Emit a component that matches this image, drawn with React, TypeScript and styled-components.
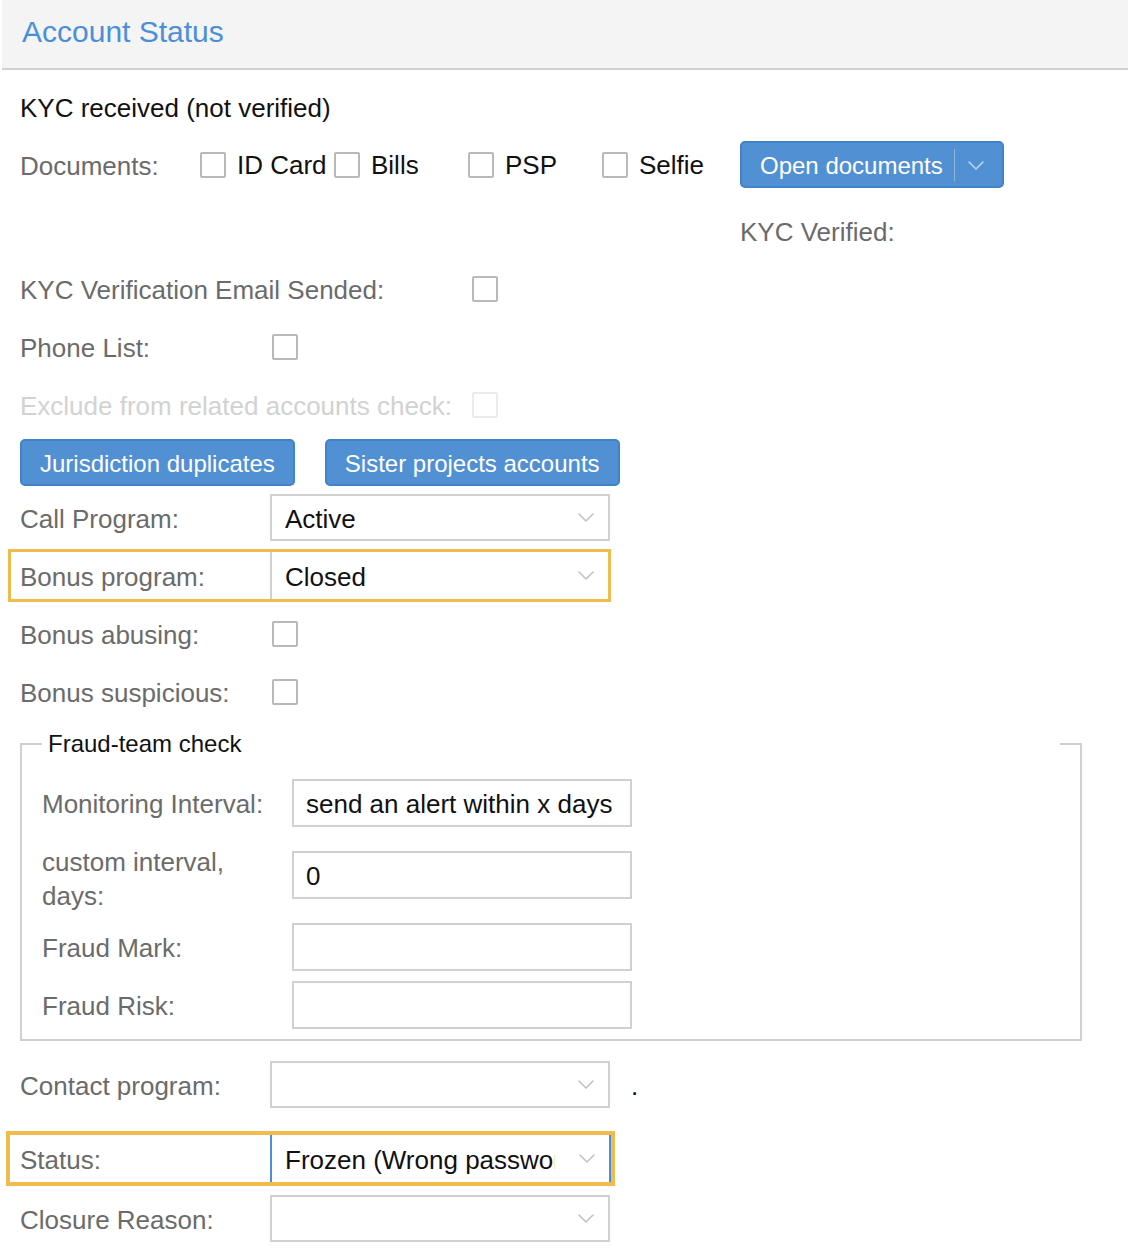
import * as React from "react";
import styled, { createGlobalStyle } from 'styled-components'

const blue = '#5190d2'
const grayText = '#6b6b6b'
const lineGray = '#d0d0d0'
const orange = '#f2bb4e'

const GlobalStyle = createGlobalStyle`
  body {
    margin: 0;
    background: #fff;
    font-family: "Liberation Sans", Arial, sans-serif;
  }
`

const Panel = styled.div`
  margin-left: 2px;
  width: 1126px;
`

const Header = styled.div`
  height: 70px;
  box-sizing: border-box;
  padding: 0 0 4px 20px;
  display: flex;
  align-items: center;
  background: #f4f4f4;
  border-bottom: 2px solid ${lineGray};
  color: #4a8fd8;
  font-size: 30px;
`

const Body = styled.div`
  padding: 13px 0 0 18px;
  display: flex;
  flex-direction: column;
  gap: 11px;
  font-size: 26px;
  color: #111;
`

const Group = styled.div<{ $gap: number }>`
  display: flex;
  flex-direction: column;
  gap: ${p => p.$gap}px;
`

const Row = styled.div`
  display: flex;
  align-items: center;
  min-height: 47px;
`

const ContactRow = styled(Row)`
  padding-bottom: 14px;
`

const Label = styled.div<{ $w?: number; $muted?: boolean }>`
  width: ${p => p.$w ?? 250}px;
  flex-shrink: 0;
  white-space: nowrap;
  padding-top: 3px;
  line-height: 44px;
  color: ${p => (p.$muted ? '#d2d2d2' : grayText)};
`

const Plain = styled.div`
  padding-top: 3px;
  line-height: 44px;
  color: #111;
`

const DocsRow = styled.div`
  display: flex;
  align-items: flex-start;
`

const CheckItem = styled.label`
  width: 134px;
  height: 47px;
  display: flex;
  align-items: center;
  gap: 11px;
  white-space: nowrap;
  color: #111;
`

const CheckText = styled.span`
  padding-top: 2px;
`

const RightCol = styled.div`
  margin-left: 4px;
  display: flex;
  flex-direction: column;
  align-items: flex-start;
  gap: 19px;
`

const Checkbox = styled.span<{ $disabled?: boolean }>`
  display: inline-block;
  width: 26px;
  height: 26px;
  box-sizing: border-box;
  border: 2px solid ${p => (p.$disabled ? '#ebebeb' : '#b9b9b9')};
  border-radius: 2px;
  background: #fff;
  flex-shrink: 0;
`

const BoxSlot = styled.div`
  padding-left: 2px;
  display: flex;
  align-items: center;
`

const Button = styled.button`
  height: 47px;
  box-sizing: border-box;
  padding: 2px 18px 0;
  display: inline-flex;
  align-items: center;
  background: ${blue};
  border: 2px solid #4282c8;
  border-radius: 5px;
  color: #fff;
  font-family: inherit;
  font-size: 24px;
  cursor: pointer;
`

const ButtonRow = styled.div`
  display: flex;
  gap: 30px;
`

const SplitDivider = styled.span`
  width: 1px;
  height: 32px;
  margin: -2px 13px 0 11px;
  background: rgba(255, 255, 255, 0.35);
`

type SelectKind = 'plain' | 'boxed' | 'focus'

const SelectBox = styled.div<{ $kind: SelectKind }>`
  width: ${p => (p.$kind === 'plain' ? '340px' : 'auto')};
  flex: ${p => (p.$kind === 'plain' ? '0 0 auto' : '1')};
  min-width: 0;
  height: ${p => (p.$kind === 'plain' ? '47px' : 'auto')};
  align-self: stretch;
  box-sizing: border-box;
  padding: 0 14px 0 13px;
  display: flex;
  align-items: center;
  gap: 24px;
  background: #fff;
  color: #111;
  border: 2px solid ${lineGray};
  ${p => p.$kind === 'boxed' && `border-width: 0 0 0 2px;`}
  ${p => p.$kind === 'focus' && `border-width: 0 2px; border-color: #4a8fd8;`}
  & > svg {
    flex-shrink: 0;
  }
`

const SelectValue = styled.span`
  flex: 1;
  min-width: 0;
  padding-top: 3px;
  overflow: hidden;
  white-space: nowrap;
`

const Highlight = styled.div<{ $thick?: boolean }>`
  box-sizing: border-box;
  display: flex;
  width: ${p => (p.$thick ? 609 : 603)}px;
  margin-left: ${p => (p.$thick ? -14 : -12)}px;
  padding-left: ${p => (p.$thick ? 10 : 9)}px;
  border: ${p => (p.$thick ? 4 : 3)}px solid ${orange};
  min-height: ${p => (p.$thick ? 54 : 53)}px;
  & > ${Label} {
    align-self: center;
  }
`

const Dot = styled.span`
  margin-left: 21px;
  padding-top: 3px;
  color: #111;
`

const Fieldset = styled.fieldset`
  margin: 0;
  width: 1062px;
  box-sizing: border-box;
  padding: 0 20px 10px;
  border: 2px solid ${lineGray};
`

const Legend = styled.legend`
  width: 100%;
  box-sizing: border-box;
  padding: 0 0 0 6px;
  font-size: 24px;
  line-height: 36px;
  color: #111;
`

const FieldList = styled.div`
  padding-top: 17px;
  display: flex;
  flex-direction: column;
  gap: 10px;
`

const FieldRow = styled.div`
  display: flex;
  align-items: center;
  min-height: 48px;
`

const FieldLabel = styled.div<{ $multi?: boolean }>`
  width: 250px;
  flex-shrink: 0;
  line-height: 34px;
  padding-top: ${p => (p.$multi ? 8 : 2)}px;
  color: ${grayText};
`

const TextInput = styled.div`
  width: 340px;
  height: 48px;
  box-sizing: border-box;
  padding: 3px 12px 0;
  display: flex;
  align-items: center;
  border: 2px solid ${lineGray};
  color: #111;
  white-space: nowrap;
`

const BottomGroup = styled(Group)`
  margin-top: 9px;
`

function Chevron({ color = '#c2c2c2' }: { color?: string }) {
  return (
    <svg width="16" height="9" viewBox="0 0 16 9" fill="none">
      <path d="M1 1 L8 8 L15 1" stroke={color} strokeWidth="1.6" strokeLinecap="round" strokeLinejoin="round" />
    </svg>
  )
}

function Select({ value, kind = 'plain' }: { value?: string; kind?: SelectKind }) {
  return (
    <SelectBox $kind={kind}>
      <SelectValue>{value}</SelectValue>
      <Chevron />
    </SelectBox>
  )
}

const documents = ['ID Card', 'Bills', 'PSP', 'Selfie']

export default function App() {
  return (
    <Panel>
      <GlobalStyle />
      <Header>Account Status</Header>
      <Body>
        <Row>
          <Plain>KYC received (not verified)</Plain>
        </Row>

        <DocsRow>
          <Label $w={180}>Documents:</Label>
          {documents.map(doc => (
            <CheckItem key={doc}>
              <Checkbox />
              <CheckText>{doc}</CheckText>
            </CheckItem>
          ))}
          <RightCol>
            <Button>
              Open documents
              <SplitDivider />
              <Chevron color="#bcd5f0" />
            </Button>
            <Label>KYC Verified:</Label>
          </RightCol>
        </DocsRow>

        <Row>
          <Label $w={450}>KYC Verification Email Sended:</Label>
          <BoxSlot><Checkbox /></BoxSlot>
        </Row>
        <Row>
          <Label>Phone List:</Label>
          <BoxSlot><Checkbox /></BoxSlot>
        </Row>
        <Row>
          <Label $w={450} $muted>Exclude from related accounts check:</Label>
          <BoxSlot><Checkbox $disabled /></BoxSlot>
        </Row>

        <Group $gap={8}>
          <ButtonRow>
            <Button>Jurisdiction duplicates</Button>
            <Button>Sister projects accounts</Button>
          </ButtonRow>
          <Row>
            <Label>Call Program:</Label>
            <Select value="Active" />
          </Row>
          <Highlight>
            <Label>Bonus program:</Label>
            <Select value="Closed" kind="boxed" />
          </Highlight>
          <Row>
            <Label>Bonus abusing:</Label>
            <BoxSlot><Checkbox /></BoxSlot>
          </Row>
        </Group>
        <Row>
          <Label>Bonus suspicious:</Label>
          <BoxSlot><Checkbox /></BoxSlot>
        </Row>

        <Fieldset>
          <Legend>Fraud-team check</Legend>
          <FieldList>
            <FieldRow>
              <FieldLabel>Monitoring Interval:</FieldLabel>
              <TextInput>send an alert within x days</TextInput>
            </FieldRow>
            <FieldRow>
              <FieldLabel $multi>custom interval,<br />days:</FieldLabel>
              <TextInput>0</TextInput>
            </FieldRow>
            <FieldRow>
              <FieldLabel>Fraud Mark:</FieldLabel>
              <TextInput />
            </FieldRow>
            <FieldRow>
              <FieldLabel>Fraud Risk:</FieldLabel>
              <TextInput />
            </FieldRow>
          </FieldList>
        </Fieldset>

        <BottomGroup $gap={9}>
          <ContactRow>
            <Label>Contact program:</Label>
            <Select />
            <Dot>.</Dot>
          </ContactRow>
          <Highlight $thick>
            <Label>Status:</Label>
            <Select value="Frozen (Wrong password)" kind="focus" />
          </Highlight>
          <Row>
            <Label>Closure Reason:</Label>
            <Select />
          </Row>
        </BottomGroup>
      </Body>
    </Panel>
  )
}
